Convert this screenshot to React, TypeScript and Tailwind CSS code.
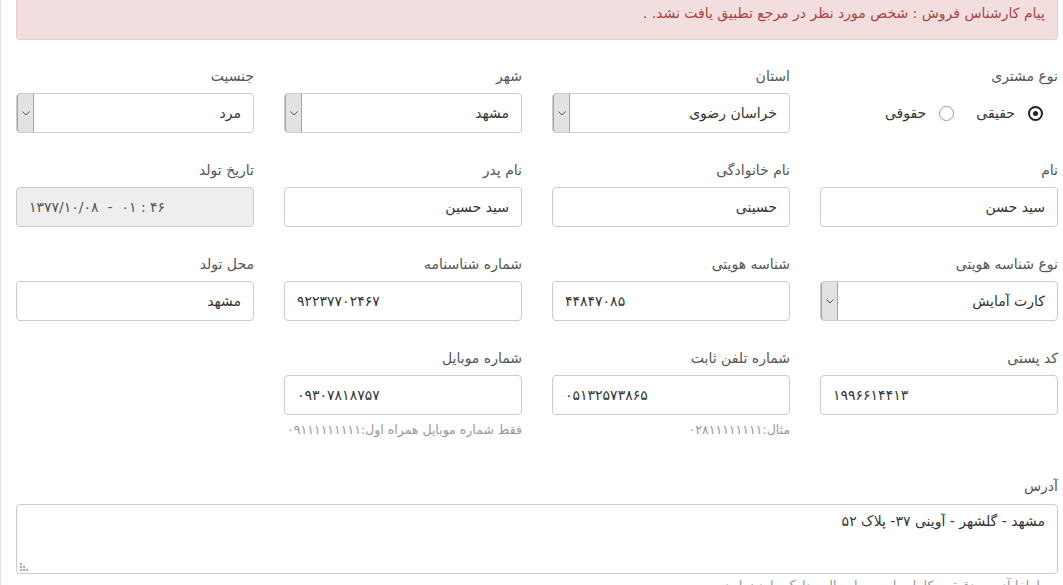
import React from 'react'

const font = { fontFamily: '"DejaVu Sans", sans-serif' }

function Label({ children }: { children: React.ReactNode }) {
  return <div className="h-5 leading-5 text-[14px] text-[#555] mb-[7px]">{children}</div>
}

function TextBox({ value, ltr, disabled }: { value: string; ltr?: boolean; disabled?: boolean }) {
  return (
    <div
      dir={ltr ? 'ltr' : 'rtl'}
      className={`h-10 border border-[#ccc] rounded px-3 flex items-center text-[14px] whitespace-pre ${
        disabled ? 'bg-[#eee] text-[#555]' : 'bg-white text-[#333]'
      }`}
    >
      {value}
    </div>
  )
}

function Select({ value }: { value: string }) {
  return (
    <div className="h-10 border border-[#ccc] rounded flex items-stretch bg-white text-[14px] text-[#333]">
      <div className="flex-1 flex items-center pr-3">{value}</div>
      <div className="w-[17px] bg-[#e2e2e2] border-x border-[#a5a5a5] rounded-l-[3px] flex items-center justify-center">
        <svg width="8" height="5" viewBox="0 0 8 5" fill="none">
          <path d="M0.5 0.5 L4 4 L7.5 0.5" stroke="#555" strokeWidth="1" />
        </svg>
      </div>
    </div>
  )
}

function Help({ children }: { children: React.ReactNode }) {
  return <div className="mt-[7px] h-4 leading-4 text-[12.5px] text-[#999] whitespace-nowrap">{children}</div>
}

export default function App() {
  return (
    <div dir="rtl" style={font} className="min-h-screen bg-white border-l border-[#ddd] pl-[15px] pr-[5px]">
      <div className="h-10 bg-[#f2dede] border-b border-x border-[#ebccd1] rounded-b pt-[3px] pr-3 text-[14px] leading-5 text-[#a94442]">
        پیام کارشناس فروش : شخص مورد نظر در مرجع تطبیق یافت نشد. .
      </div>

      <div className="grid grid-cols-[repeat(4,238px)] gap-x-[30px] gap-y-[27px] mt-[26px]">
        <div>
          <Label>نوع مشتری</Label>
          <div className="h-10 flex items-center pr-[15px] text-[14px] text-[#333]">
            <span className="w-[15px] h-[15px] rounded-full border-2 border-[#222] flex items-center justify-center">
              <span className="w-[5px] h-[5px] rounded-full bg-[#222]" />
            </span>
            <span className="mr-[13px]">حقیقی</span>
            <span className="w-[15px] h-[15px] rounded-full border border-[#999] mr-[22px]" />
            <span className="mr-[13px]">حقوقی</span>
          </div>
        </div>
        <div>
          <Label>استان</Label>
          <Select value="خراسان رضوی" />
        </div>
        <div>
          <Label>شهر</Label>
          <Select value="مشهد" />
        </div>
        <div>
          <Label>جنسیت</Label>
          <Select value="مرد" />
        </div>

        <div>
          <Label>نام</Label>
          <TextBox value="سید حسن" />
        </div>
        <div>
          <Label>نام خانوادگی</Label>
          <TextBox value="حسینی" />
        </div>
        <div>
          <Label>نام پدر</Label>
          <TextBox value="سید حسین" />
        </div>
        <div>
          <Label>تاریخ تولد</Label>
          <TextBox value="۱۳۷۷/۱۰/۰۸  -  ۰۱ : ۴۶" ltr disabled />
        </div>

        <div>
          <Label>نوع شناسه هویتی</Label>
          <Select value="کارت آمایش" />
        </div>
        <div>
          <Label>شناسه هویتی</Label>
          <TextBox value="۴۴۸۴۷۰۸۵" ltr />
        </div>
        <div>
          <Label>شماره شناسنامه</Label>
          <TextBox value="۹۲۲۳۷۷۰۲۴۶۷" ltr />
        </div>
        <div>
          <Label>محل تولد</Label>
          <TextBox value="مشهد" />
        </div>

        <div>
          <Label>کد پستی</Label>
          <TextBox value="۱۹۹۶۶۱۴۴۱۳" ltr />
        </div>
        <div>
          <Label>شماره تلفن ثابت</Label>
          <TextBox value="۰۵۱۳۲۵۷۳۸۶۵" ltr />
          <Help>مثال:۰۲۸۱۱۱۱۱۱۱۱</Help>
        </div>
        <div>
          <Label>شماره موبایل</Label>
          <TextBox value="۰۹۳۰۷۸۱۸۷۵۷" ltr />
          <Help>فقط شماره موبایل همراه اول:۰۹۱۱۱۱۱۱۱۱۱</Help>
        </div>
        <div />
      </div>

      <div className="mt-[38px]">
        <div className="h-5 leading-5 text-[14px] text-[#555] mb-[8px]">آدرس</div>
        <div className="relative">
          <textarea
            readOnly
            defaultValue="مشهد - گلشهر - آوینی ۳۷- پلاک ۵۲"
            style={font}
            className="block w-[1042px] h-[70px] border border-[#ccc] rounded px-3 pt-[6px] text-[14px] leading-5 text-[#333] outline-none resize-none"
          />
          <svg className="absolute left-[4px] bottom-[3px]" width="8" height="8" viewBox="0 0 8 8">
            <rect x="0" y="0" width="2" height="2" fill="#aaa" />
            <rect x="0" y="3" width="2" height="2" fill="#aaa" />
            <rect x="3" y="3" width="2" height="2" fill="#aaa" />
            <rect x="0" y="6" width="2" height="2" fill="#aaa" />
            <rect x="3" y="6" width="2" height="2" fill="#aaa" />
            <rect x="6" y="6" width="2" height="2" fill="#aaa" />
          </svg>
        </div>
        <div className="mt-[4px] pr-[18px] text-[13px] leading-4 text-[#999]">
          لطفا آدرس دقیق و کامل را جهت ارسال مدارک وارد نمایید
        </div>
      </div>
    </div>
  )
}
